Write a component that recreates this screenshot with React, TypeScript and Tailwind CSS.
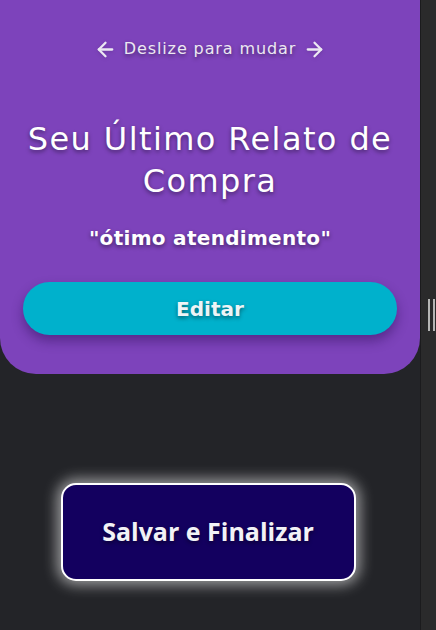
import { ArrowLeft, ArrowRight } from 'lucide-react';

const shadow = '[text-shadow:0_2px_4px_rgba(0,0,0,0.45)]';

export default function App() {
  return (
    <div className="flex h-[630px] w-[436px] overflow-hidden bg-[#232428] font-['DejaVu_Sans',sans-serif]">
      <div className="flex w-[420px] flex-col">
        {/* Card */}
        <div className="flex h-[374px] flex-col items-center rounded-b-[36px] bg-[#7d43bb] px-[23px] pt-[37px] text-white">
          <div className={`flex items-center gap-[7px] text-[16px] tracking-[0.9px] text-[#ece8f2] ${shadow}`}>
            <ArrowLeft className="size-[23px] drop-shadow" strokeWidth={2.4} />
            <span>Deslize para mudar</span>
            <ArrowRight className="size-[23px] drop-shadow" strokeWidth={2.4} />
          </div>

          <h1 className={`mt-[57px] text-center text-[32px] leading-[42px] font-normal tracking-[1.4px] ${shadow}`}>
            Seu Último Relato de Compra
          </h1>

          <p className={`mt-[22px] text-[20px] font-bold leading-[28px] tracking-[0.3px] ${shadow}`}>"ótimo atendimento"</p>

          <button className="mt-[30px] h-[53px] w-full rounded-full bg-[#00b1cc] shadow-[0_6px_12px_rgba(40,10,80,0.45)]">
            <span className={`text-[20px] font-bold text-[#eef4f6] ${shadow}`}>Editar</span>
          </button>
        </div>

        {/* Footer action */}
        <div className="flex flex-1 justify-center pt-[109px] pr-[4px]">
          <button className="h-[98px] w-[295px] rounded-[15px] border-2 border-white bg-[#13005f] shadow-[0_0_14px_4px_rgba(255,255,255,0.55)]">
            <span className={`font-['Open_Sans',sans-serif] text-[25px] font-bold text-[#f2f2f6] ${shadow}`}>
              Salvar e Finalizar
            </span>
          </button>
        </div>
      </div>

      {/* Side panel with resize handle */}
      <div className="flex w-[16px] items-start border-l border-[#1b1b1d] bg-[#2a2a2b] pt-[299px] pl-[7px]">
        <div className="flex gap-[3px]">
          <div className="h-[32px] w-[2px] bg-[#b5b5b5]" />
          <div className="h-[32px] w-[2px] bg-[#b5b5b5]" />
        </div>
      </div>
    </div>
  );
}
